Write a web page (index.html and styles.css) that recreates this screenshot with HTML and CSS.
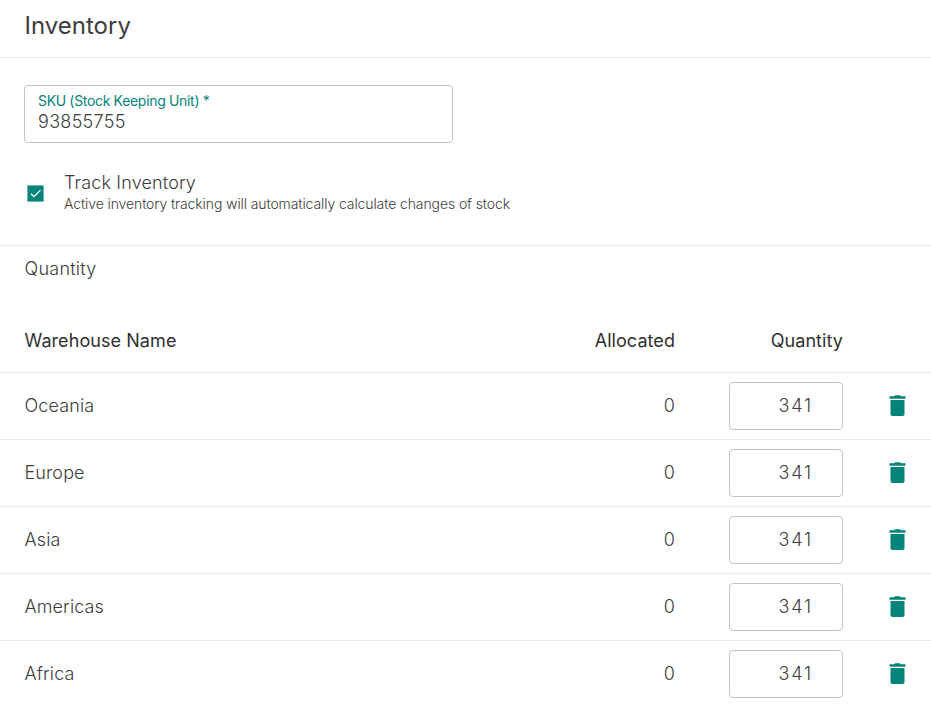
FILE: index.html
```html
<!DOCTYPE html>
<html lang="en">
<head>
<meta charset="utf-8">
<title>Inventory</title>
<link rel="stylesheet" href="styles.css">
</head>
<body>
<svg width="0" height="0" class="symbols"><symbol id="trash" viewBox="-.5 0 17 21"><path d="M0 1.3h4.500L5.700 .3h4.600l1.200 1H16v2.400H0zM1 5h14v14.200A1.800 1.800 0 0 1 13.200 21H2.800A1.800 1.800 0 0 1 1 19.200z"/></symbol></svg>
<main class="card">
  <header class="card-header"><h1>Inventory</h1></header>
  <section class="details">
    <div class="field">
      <label class="field-label">SKU (Stock Keeping Unit) *</label>
      <span class="field-value">93855755</span>
    </div>
    <div class="track">
      <svg class="checkbox" viewBox="0 0 17 17"><path fill="#8fc8c2" d="M0 0h17v17H0z"/><path fill="#06847b" d="M.8.8h15.400v15.400H.8z"/><path d="M4 8.800l2.900 2.900 6.600-6.600" fill="none" stroke="#fff" stroke-width="1.300"/></svg>
      <div class="track-text">
        <div class="track-title">Track Inventory</div>
        <div class="track-note">Active inventory tracking will automatically calculate changes of stock</div>
      </div>
    </div>
  </section>
  <section class="quantity"><h2>Quantity</h2></section>
  <table class="stock">
    <thead><tr><th class="name">Warehouse Name</th><th class="allocated">Allocated</th><th class="amount">Quantity</th><th class="action"></th></tr></thead>
    <tbody>
      <tr><td class="name">Oceania</td><td class="allocated">0</td><td class="amount"><div class="input">341</div></td><td class="action"><svg class="trash"><use href="#trash"/></svg></td></tr>
      <tr><td class="name">Europe</td><td class="allocated">0</td><td class="amount"><div class="input">341</div></td><td class="action"><svg class="trash"><use href="#trash"/></svg></td></tr>
      <tr><td class="name">Asia</td><td class="allocated">0</td><td class="amount"><div class="input">341</div></td><td class="action"><svg class="trash"><use href="#trash"/></svg></td></tr>
      <tr><td class="name">Americas</td><td class="allocated">0</td><td class="amount"><div class="input">341</div></td><td class="action"><svg class="trash"><use href="#trash"/></svg></td></tr>
      <tr><td class="name">Africa</td><td class="allocated">0</td><td class="amount"><div class="input">341</div></td><td class="action"><svg class="trash"><use href="#trash"/></svg></td></tr>
    </tbody>
  </table>
</main>
</body>
</html>
```
FILE: styles.css
```css
* { box-sizing: border-box; }
body { margin: 0; background: #fff; color: #3d3d3d; font-family: Inter, sans-serif; font-size: 18px; font-weight: 300; letter-spacing: 0.12px; overflow: hidden; }
h1, h2 { margin: 0; }
.symbols { display: none; }
.card-header { height: 58px; padding: 8px 24px 0; border-bottom: 1px solid #eaeaea; }
h1 { font-size: 24px; line-height: 36px; font-weight: 400; letter-spacing: 0; padding-left: .5px; }
.details { height: 188px; padding: 27px 24px 0; border-bottom: 1px solid #eaeaea; }
.field { width: 429px; height: 58px; border: 1px solid #c4c4c4; border-radius: 4px; padding: 6px 13px; display: flex; flex-direction: column; }
.field-label { font-size: 14px; line-height: 18px; font-weight: 400; letter-spacing: -0.3px; word-spacing: -0.2px; color: #06847b; }
.field-value { line-height: 24px; letter-spacing: 0.3px; }
.track { display: flex; align-items: center; gap: 20px; margin: 28px 0 0 3px; }
.checkbox { width: 17px; height: 17px; margin-top: 2px; }
.track-title { line-height: 24px; letter-spacing: 0.15px; }
.track-note { font-size: 14px; line-height: 18px; letter-spacing: -0.1px; }
.quantity { height: 63px; padding: 11px 24.5px 0; }
h2 { font-size: 18px; line-height: 24px; font-weight: 300; letter-spacing: 0.25px; }
.stock { width: 931px; border-collapse: separate; border-spacing: 0; table-layout: fixed; }
th { height: 64px; font-weight: 400; padding: 0; border-bottom: 1px solid #eaeaea; letter-spacing: 0.07px; color: #303030; }
td { height: 67px; padding: 0 0 1px; border-bottom: 1px solid #eaeaea; }
.name { padding-left: 24.5px; text-align: left; }
.allocated { width: 150px; text-align: right; }
.amount { width: 168px; text-align: right; }
td.amount { padding: 0; }
.action { width: 88px; }
.input { width: 114px; height: 48px; margin-left: auto; padding-right: 29px; border: 1px solid #c4c4c4; border-radius: 4px; line-height: 46px; letter-spacing: 1.8px; }
.trash { display: block; width: 17px; height: 21px; margin-left: 46px; fill: #06847b; }
```
